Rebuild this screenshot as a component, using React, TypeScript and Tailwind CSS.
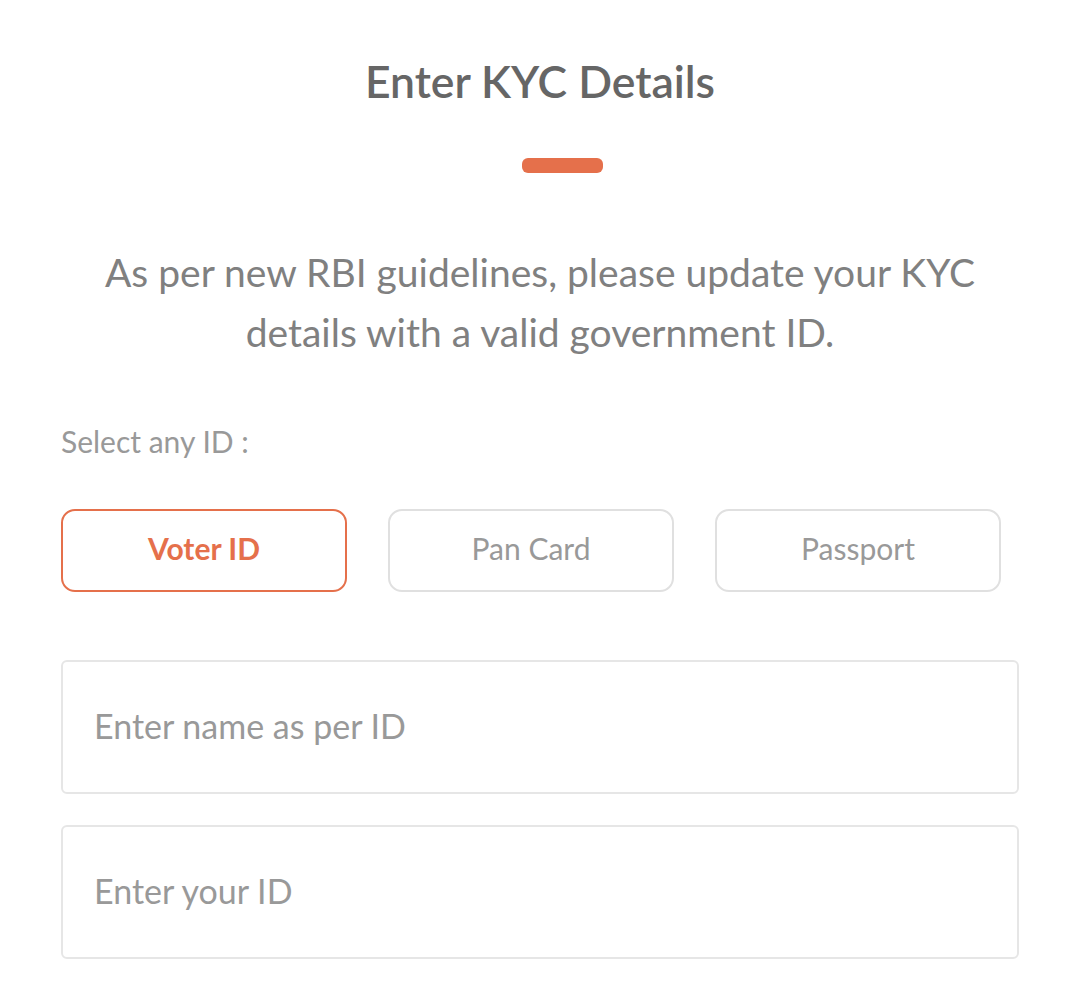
import React, { useState } from 'react';

const ID_TYPES = ['Voter ID', 'Pan Card', 'Passport'];

const App: React.FC = () => {
  const [selected, setSelected] = useState('Voter ID');

  return (
    <div
      className="min-h-screen bg-white px-[61px] flex flex-col"
      style={{ fontFamily: 'Lato, "Open Sans", sans-serif' }}
    >
      <h1 className="pt-[53px] text-center text-[44.5px] leading-[56px] font-semibold text-[#666666]">
        Enter KYC Details
      </h1>
      <div className="ml-[461px] mt-[49px] h-[15px] w-[81px] rounded-[6px] bg-[#e5704b]" />

      <p className="mt-[69px] text-center text-[39px] leading-[60px] text-[#808080]">
        As per new RBI guidelines, please update your KYC
        <br />
        details with a valid government ID.
      </p>

      <p className="mt-[61px] text-[30px] leading-[36px] text-[#999999]">Select any ID :</p>

      <div className="mt-[50px] flex gap-[41px]">
        {ID_TYPES.map((t) => {
          const active = t === selected;
          return (
            <button
              key={t}
              onClick={() => setSelected(t)}
              className={
                active
                  ? 'h-[83px] w-[286px] rounded-[14px] border-[2.5px] border-[#e5704b] pb-[4px] text-[30px] font-bold text-[#e5704b]'
                  : 'h-[83px] w-[286px] rounded-[14px] border-[2.5px] border-[#e0e0e0] pb-[4px] text-[30px] text-[#999999]'
              }
            >
              {t}
            </button>
          );
        })}
      </div>

      <div className="mt-[68px] flex flex-col gap-[31px]">
        <input
          placeholder="Enter name as per ID"
          className="h-[134px] w-full rounded-[6px] border-2 border-[#e6e6e6] px-[31px] pb-[4px] text-[34px] text-[#666666] outline-none placeholder:text-[#999999]"
        />
        <input
          placeholder="Enter your ID"
          className="h-[134px] w-full rounded-[6px] border-2 border-[#e6e6e6] px-[31px] pb-[4px] text-[34px] text-[#666666] outline-none placeholder:text-[#999999]"
        />
      </div>
    </div>
  );
};

export default App;
